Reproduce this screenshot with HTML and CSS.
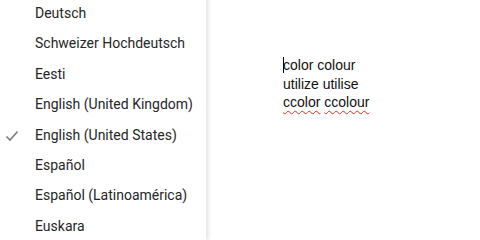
FILE: index.html
```html
<!DOCTYPE html>
<html lang="en">
<head>
    <meta charset="UTF-8">
    <title>Language menu</title>
    <link rel="stylesheet" href="styles.css">
</head>
<body>
    <div class="page">
        <ul class="menu">
            <li class="item">Deutsch</li>
            <li class="item">Schweizer Hochdeutsch</li>
            <li class="item">Eesti</li>
            <li class="item">English (United Kingdom)</li>
            <li class="item checked">
                <svg class="check" width="14" height="12" viewBox="0 0 14 12">
                    <path d="M1.5 6.5 L5 10 L12.5 1.5" fill="none" stroke="#7a7a7a" stroke-width="1.6"/>
                </svg>
                English (United States)
            </li>
            <li class="item">Español</li>
            <li class="item">Español (Latinoamérica)</li>
            <li class="item">Euskara</li>
        </ul>
        <div class="doc">
            <p><span class="cursor"></span>color colour</p>
            <p>utilize utilise</p>
            <p><span class="typo">ccolor</span> <span class="typo">ccolour</span></p>
        </div>
    </div>
</body>
</html>
```

FILE: styles.css
```css
* {
    margin: 0;
    padding: 0;
    box-sizing: border-box;
}

html, body {
    background: #fff;
    width: 480px;
    height: 240px;
    overflow: hidden;
}

.page {
    display: flex;
    align-items: flex-start;
    height: 240px;
    overflow: hidden;
}

.menu {
    list-style: none;
    width: 206px;
    height: 242px;
    margin-top: -2px;
    overflow: hidden;
    background: #fff;
    box-shadow: 2px 0 5px rgba(0, 0, 0, 0.12);
    font-family: Roboto, "Liberation Sans", sans-serif;
    font-size: 14px;
    color: #262626;
}

.item {
    position: relative;
    height: 30.4px;
    line-height: 30.4px;
    padding-left: 35px;
    white-space: nowrap;
}

.check {
    position: absolute;
    left: 5px;
    top: 10px;
}

.doc {
    margin-left: 77px;
    margin-top: 56px;
    font-family: "Liberation Sans", Arial, sans-serif;
    font-size: 14px;
    line-height: 18.5px;
    color: #111;
}

.cursor {
    display: inline-block;
    width: 1px;
    height: 16px;
    background: #000;
    vertical-align: -3px;
    margin-right: -1px;
}

.typo {
    text-decoration: underline wavy #d93025;
    text-decoration-thickness: 1px;
    text-underline-offset: 3px;
}
```
